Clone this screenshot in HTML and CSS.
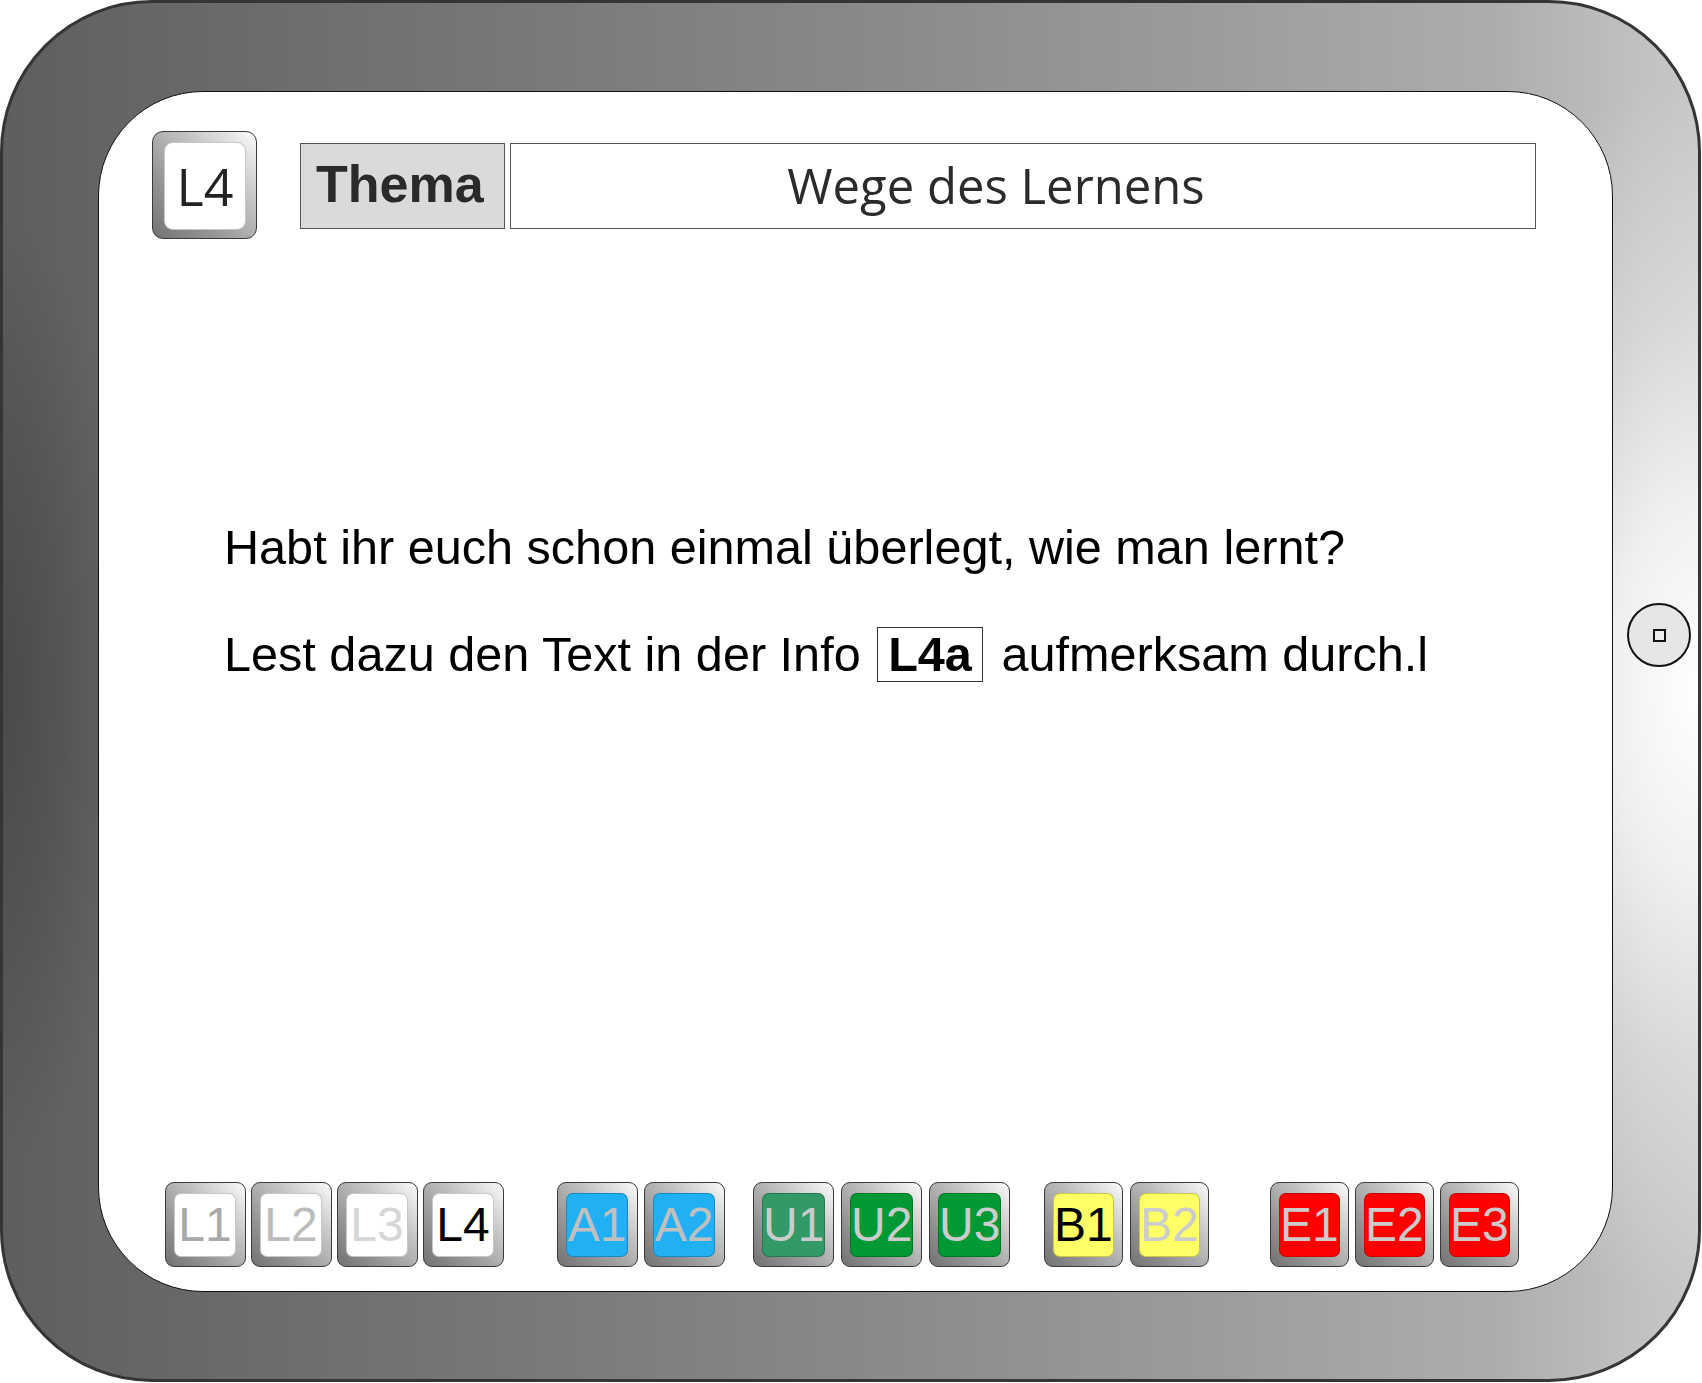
FILE: index.html
```html
<!DOCTYPE html>
<html lang="de">
<head>
<meta charset="utf-8">
<title>Wege des Lernens</title>
<link rel="stylesheet" href="styles.css">
</head>
<body>
<div class="device">
  <div class="screen">
    <header class="top">
      <div class="key key-lg"><span class="face face-w txt-top">L4</span></div>
      <div class="thema">Thema</div>
      <div class="title">Wege des Lernens</div>
    </header>
    <main class="content">
      <p>Habt ihr euch schon einmal überlegt, wie man lernt?</p>
      <p>Lest dazu den Text in der Info <span class="ref">L4a</span> aufmerksam durch.l</p>
    </main>
    <nav class="keys">
      <div class="group">
        <div class="key"><span class="face face-w t-l1">L1</span></div>
        <div class="key"><span class="face face-w t-l2">L2</span></div>
        <div class="key"><span class="face face-w t-l3">L3</span></div>
        <div class="key"><span class="face face-w t-black">L4</span></div>
      </div>
      <div class="group g-a">
        <div class="key"><span class="face face-a t-silver">A1</span></div>
        <div class="key"><span class="face face-a t-silver">A2</span></div>
      </div>
      <div class="group g-u">
        <div class="key"><span class="face face-u1 t-light">U1</span></div>
        <div class="key"><span class="face face-u t-light">U2</span></div>
        <div class="key"><span class="face face-u t-light">U3</span></div>
      </div>
      <div class="group g-b">
        <div class="key"><span class="face face-b t-black">B1</span></div>
        <div class="key"><span class="face face-b t-light">B2</span></div>
      </div>
      <div class="group g-e">
        <div class="key"><span class="face face-e t-light">E1</span></div>
        <div class="key"><span class="face face-e t-light">E2</span></div>
        <div class="key"><span class="face face-e t-light">E3</span></div>
      </div>
    </nav>
  </div>
  <aside class="side">
    <div class="home"><span class="home-sq"></span></div>
  </aside>
</div>
</body>
</html>
```
FILE: styles.css
```css
html, body {
  margin: 0;
  padding: 0;
  background: #ffffff;
}

body {
  width: 1702px;
  height: 1383px;
  overflow: hidden;
  font-family: "Liberation Sans", Arial, sans-serif;
}

.device {
  box-sizing: border-box;
  width: 1701px;
  height: 1382px;
  border: 3px solid #353535;
  border-radius: 152px;
  padding: 88px 0 0 95px;
  display: flex;
  align-items: flex-start;
  background:
    radial-gradient(ellipse 300px 620px at 100% 50%, rgba(255,255,255,1) 0%, rgba(255,255,255,0.75) 30%, rgba(255,255,255,0.35) 60%, rgba(255,255,255,0) 100%),
    radial-gradient(ellipse 130px 480px at 0% 50%, rgba(0,0,0,0.22) 0%, rgba(0,0,0,0.12) 50%, rgba(0,0,0,0) 100%),
    linear-gradient(to right, #5e5e5e 0%, #646464 6%, #777777 29%, #8b8b8b 53%, #9b9b9b 70%, #adadad 88%, #c2c2c2 97%, #c6c6c6 100%);
}

.screen {
  box-sizing: border-box;
  width: 1515px;
  height: 1201px;
  border: 1px solid #111111;
  border-radius: 105px;
  background: #ffffff;
  display: flex;
  flex-direction: column;
  padding: 39px 0 24px 53px;
}

/* header */
.top {
  display: flex;
  align-items: flex-start;
}

.thema {
  box-sizing: border-box;
  width: 205px;
  height: 86px;
  margin: 12px 0 0 43px;
  border: 1px solid #555555;
  background: #d9dbda;
  color: #2a2a2a;
  font-weight: bold;
  font-size: 52px;
  line-height: 80px;
  padding-left: 15px;
}

.title {
  box-sizing: border-box;
  width: 1026px;
  height: 86px;
  margin: 12px 0 0 5px;
  border: 1px solid #555555;
  background: #ffffff;
  color: #2b2b2b;
  font-family: "Open Sans", "Noto Sans", sans-serif;
  font-size: 49px;
  line-height: 82px;
  text-align: center;
  padding-right: 54px;
}

/* body text */
.content {
  margin-top: 278px;
  padding-left: 72px;
  font-size: 48.6px;
  line-height: 60px;
  color: #000000;
}

.content p {
  margin: 0;
}

.content p + p {
  margin-top: 47px;
}

.ref {
  display: inline-block;
  border: 1px solid #333333;
  font-weight: bold;
  line-height: 53px;
  padding: 0 10px;
  margin: 0 5px 0 3px;
}

/* keys */
.keys {
  margin-top: auto;
  display: flex;
  align-items: center;
  padding-left: 13px;
}

.group {
  display: flex;
  gap: 5px;
}

.g-a { margin-left: 53px; gap: 6px; }
.g-u { margin-left: 28px; gap: 7px; }
.g-b { margin-left: 34px; gap: 7px; }
.g-e { margin-left: 61px; gap: 6px; }

.key {
  box-sizing: border-box;
  width: 81px;
  height: 85px;
  border: 1px solid #3a3a3a;
  border-radius: 9px;
  padding: 10px 9px 9px 8px;
  display: flex;
  background: linear-gradient(to bottom left, #fbfbfb 0%, #c4c4c4 35%, #959595 70%, #727272 100%);
}

.g-b .key,
.g-e .key {
  width: 79px;
}

.key-lg {
  width: 105px;
  height: 108px;
  border-radius: 11px;
  padding: 10px 10px 8px 11px;
}

.face {
  flex: 1;
  display: flex;
  align-items: center;
  justify-content: center;
  border-radius: 7px;
  border: 1px solid rgba(0,0,0,0.22);
  font-size: 48px;
  line-height: 1;
  white-space: nowrap;
}

.txt-top {
  border-radius: 9px;
  font-family: "Open Sans", "Noto Sans", sans-serif;
  font-size: 52px;
  color: #222222;
}

.face-w { background: #ffffff; }
.face-a { background: #22b0f5; }
.face-u1 { background: #339966; }
.face-u { background: #009933; }
.face-b { background: #ffff66; }
.face-e { background: #ff0000; }

.t-l1 { color: #a8a8a8; }
.t-l2 { color: #bcbcbc; }
.t-l3 { color: #d6d6d6; }
.t-black { color: #000000; }
.t-silver { color: #c0c0c0; }
.t-light { color: #cccccc; }

/* side home button */
.side {
  flex: 1;
  display: flex;
  justify-content: center;
  padding: 512px 0 0 7px;
}

.home {
  box-sizing: border-box;
  width: 64px;
  height: 64px;
  border: 2px solid #111111;
  border-radius: 50%;
  background: #e6e6e6;
  display: flex;
  align-items: center;
  justify-content: center;
}

.home-sq {
  box-sizing: border-box;
  width: 13px;
  height: 13px;
  border: 2px solid #111111;
  background: #eeeeee;
}
```
